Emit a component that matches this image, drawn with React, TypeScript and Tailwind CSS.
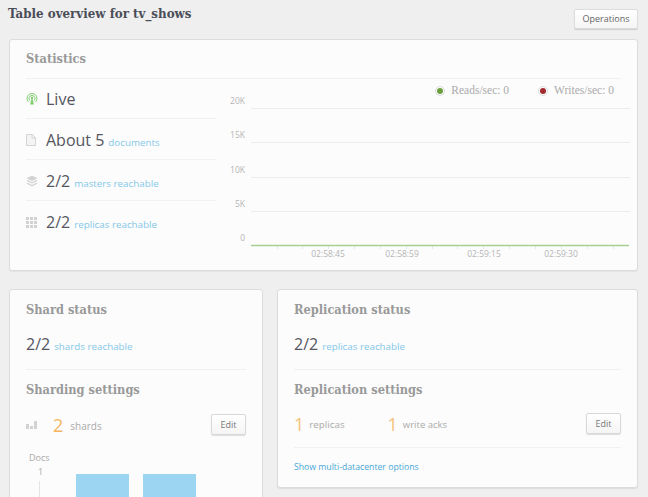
import { ReactNode } from "react";

const slab = "font-['DejaVu_Serif',serif] [font-stretch:condensed] font-bold";

function Heading({ children, className = "" }: { children: ReactNode; className?: string }) {
  return <h2 className={`${slab} text-[12.700px] leading-5 text-[#999] ${className}`}>{children}</h2>;
}

function Stat({ value, label }: { value: string; label: string }) {
  return (
    <p className="flex items-baseline gap-[4px] whitespace-nowrap">
      <span className="text-[16px] leading-6 text-[#55565f]">{value}</span>
      {label && <span className="text-[9.8px] text-[#84c8e8]">{label}</span>}
    </p>
  );
}

function EditButton() {
  return (
    <button className="flex h-[21px] w-[35px] items-center justify-center rounded-[2px] border border-[#d8d8d8] bg-gradient-to-b from-white to-[#f5f5f5] text-[9px] text-[#777] shadow-[0_1px_1px_rgba(0,0,0,0.12)]">
      Edit
    </button>
  );
}

function LiveIcon() {
  return (
    <svg width="12" height="12" viewBox="0 0 12 12" fill="none" stroke="#7fcf6f" strokeWidth="1">
      <path d="M2.4 9A5 5 0 1 1 9.6 9" />
      <path d="M3.8 7.5A3 3 0 1 1 8.2 7.5" />
      <circle cx="6" cy="5" r="1.2" fill="#7fcf6f" stroke="none" />
      <path d="M4 11.5 5.5 6h1L8 11.5Z" fill="#7fcf6f" stroke="none" />
    </svg>
  );
}

function DocIcon() {
  return (
    <svg width="10" height="12" viewBox="0 0 10 12" fill="#f4f4f4" stroke="#d4d4d4">
      <path d="M.5.5H6.2L9.500 3.800V11.500H.5Z" />
      <path d="M6 .5V4H9.500" fill="none" />
    </svg>
  );
}

function LayersIcon() {
  return (
    <svg width="12" height="12" viewBox="0 0 12 12" fill="#d2d2d2">
      <path d="M6 .5 11.500 3.200 6 5.900.5 3.200Z" />
      <path d="M1.800 5.100 6 7.200 10.200 5.100 11.500 5.900 6 8.600.5 5.900Z" />
      <path d="M1.800 7.800 6 9.900 10.200 7.800 11.500 8.600 6 11.400.5 8.600Z" />
    </svg>
  );
}

function GridIcon() {
  const cells = [0, 4, 8];
  return (
    <svg width="11" height="11" viewBox="0 0 11 11" fill="#d2d2d2">
      {cells.map((y) => cells.map((x) => <rect key={`${x}-${y}`} x={x} y={y} width="3" height="3" />))}
    </svg>
  );
}

function StatRow({ icon, value, label, last }: { icon: ReactNode; value: string; label: string; last?: boolean }) {
  return (
    <div className={`flex h-[41px] items-center pt-px ${last ? "" : "border-b border-[#f1f1f1]"}`}>
      <span className="flex w-[20px] justify-start">{icon}</span>
      <Stat value={value} label={label} />
    </div>
  );
}

function LegendDot({ color }: { color: string }) {
  return (
    <span className="flex h-[10px] w-[10px] items-center justify-center rounded-full border border-[#ddd] bg-white">
      <span className={`h-[6px] w-[6px] rounded-full ${color}`} />
    </span>
  );
}

function TrafficChart() {
  const grid = [
    { y: 30, label: "20K" },
    { y: 64, label: "15K" },
    { y: 99, label: "10K" },
    { y: 133, label: "5K" },
    { y: 167, label: "0" },
  ];
  const times = [
    { x: 112, label: "02:58:45" },
    { x: 186, label: "02:58:59" },
    { x: 268, label: "02:59:15" },
    { x: 345, label: "02:59:30" },
  ];
  const ticks = [61, 86, 112, 138, 164, 190, 216, 241, 267, 293, 319, 345, 371, 397];

  return (
    <svg width="414" height="186" viewBox="0 0 414 186" className="block shrink-0 font-['Open_Sans',sans-serif]">
      {grid.slice(0, 4).map((g) => (
        <line key={g.y} x1="35" x2="414" y1={g.y + 0.5} y2={g.y + 0.5} stroke="#ececec" />
      ))}
      {grid.map((g) => (
        <text key={g.label} x="29" y={g.y - 4} textAnchor="end" fontSize="8.500" fill="#b5b5b5">
          {g.label}
        </text>
      ))}
      {ticks.map((x) => (
        <line key={x} x1={x + 0.5} x2={x + 0.5} y1="168" y2="171" stroke="#e8e8e8" />
      ))}
      <line x1="35" x2="413" y1="167.500" y2="167.500" stroke="#a6cf8f" strokeWidth="1.500" />
      {times.map((t) => (
        <text key={t.label} x={t.x} y="179" textAnchor="middle" fontSize="8.500" fill="#b5b5b5">
          {t.label}
        </text>
      ))}
    </svg>
  );
}

export default function App() {
  return (
    <div className="h-[497px] w-[648px] overflow-hidden bg-[#efefef] pl-[9px] pr-[10px] font-['Open_Sans',sans-serif]">
      <header className="flex h-[39px] items-start justify-between">
        <h1 className={`${slab} -ml-px mt-[4px] text-[13.200px] leading-5 text-[#4a4d57]`}>Table overview for tv_shows</h1>
        <button className="mt-[9px] flex h-[20px] w-[64px] items-center justify-center rounded-[2px] border border-[#ddd] bg-gradient-to-b from-white to-[#f5f5f5] text-[9px] text-[#666] shadow-[0_1px_1px_rgba(0,0,0,0.15)]">
          Operations
        </button>
      </header>

      <section className="relative h-[232px] rounded-[3px] border border-[#dcdcdc] bg-[#fcfcfc] px-[16px] pt-[9px] shadow-[0_1px_1px_rgba(0,0,0,0.05)]">
        <Heading className="h-[30px] border-b border-[#f1f1f1]">Statistics</Heading>
        <div className="absolute right-[23px] top-[42px] flex gap-[29px] font-['Liberation_Serif',serif] text-[11.5px] text-[#aaa]">
          <span className="flex items-center gap-[6px]">
            <LegendDot color="bg-[#6b9f3f]" />
            Reads/sec: 0
          </span>
          <span className="flex items-center gap-[6px]">
            <LegendDot color="bg-[#a32a2e]" />
            Writes/sec: 0
          </span>
        </div>
        <div className="-mt-px flex">
          <div className="w-[190px] shrink-0">
            <StatRow icon={<LiveIcon />} value="Live" label="" />
            <StatRow icon={<DocIcon />} value="About 5" label="documents" />
            <StatRow icon={<LayersIcon />} value="2/2" label="masters reachable" />
            <StatRow icon={<GridIcon />} value="2/2" label="replicas reachable" last />
          </div>
          <TrafficChart />
        </div>
      </section>

      <div className="mt-[18px] flex gap-[14px]">
        <section className="h-[260px] w-[254px] shrink-0 rounded-[3px] border border-[#dcdcdc] bg-[#fcfcfc] px-[16px] pt-[10px]">
          <Heading>Shard status</Heading>
          <div className="mt-[12px] h-[38px] border-b border-[#f1f1f1]">
            <Stat value="2/2" label="shards reachable" />
          </div>
          <Heading className="mt-[10px]">Sharding settings</Heading>
          <div className="mt-[13px] flex items-center">
            <svg width="11" height="8" viewBox="0 0 11 8" fill="#d2d2d2">
              <rect x="0" y="3" width="3" height="5" />
              <rect x="4" y="5" width="3" height="3" />
              <rect x="8" y="0" width="3" height="8" />
            </svg>
            <span className="ml-[16px] text-[18px] leading-6 text-[#f5b55c]">2</span>
            <span className="ml-[7px] mt-[2px] text-[10px] text-[#aaa]">shards</span>
            <span className="ml-auto mb-px">
              <EditButton />
            </span>
          </div>
          <div className="mt-[14px] flex text-[9px] text-[#aaa]">
            <div className="flex w-[50px] flex-col items-start pl-[3px]">
              <span className="leading-[14px]">Docs</span>
              <span className="ml-[9px] leading-[14px]">1</span>
              <span className="ml-[10px] mt-[2px] h-[20px] w-px bg-[#e4e4e4]" />
            </div>
            <div className="mt-[23px] flex gap-[14px]">
              <div className="h-[60px] w-[53px] bg-[#9bd5f2]" />
              <div className="h-[60px] w-[53px] bg-[#9bd5f2]" />
            </div>
          </div>
        </section>

        <section className="h-[199px] flex-1 rounded-[3px] border border-[#dcdcdc] bg-[#fcfcfc] px-[16px] pt-[10px] shadow-[0_1px_1px_rgba(0,0,0,0.08)]">
          <Heading>Replication status</Heading>
          <div className="mt-[12px] h-[38px] border-b border-[#f1f1f1]">
            <Stat value="2/2" label="replicas reachable" />
          </div>
          <Heading className="mt-[10px]">Replication settings</Heading>
          <div className="mt-[11px] flex h-[37px] items-start border-b border-[#f1f1f1]">
            <span className="mt-[1px] text-[18px] leading-6 text-[#f5c27a]">1</span>
            <span className="ml-[5px] mt-[7px] text-[9.800px] text-[#aaa]">replicas</span>
            <span className="ml-[43px] mt-[1px] text-[18px] leading-6 text-[#f5c27a]">1</span>
            <span className="ml-[5px] mt-[7px] text-[9.500px] text-[#aaa]">write acks</span>
            <span className="ml-auto mt-[2px]">
              <EditButton />
            </span>
          </div>
          <a className="mt-[13px] block text-[8.700px] text-[#4aa8d8]">Show multi-datacenter options</a>
        </section>
      </div>
    </div>
  );
}
